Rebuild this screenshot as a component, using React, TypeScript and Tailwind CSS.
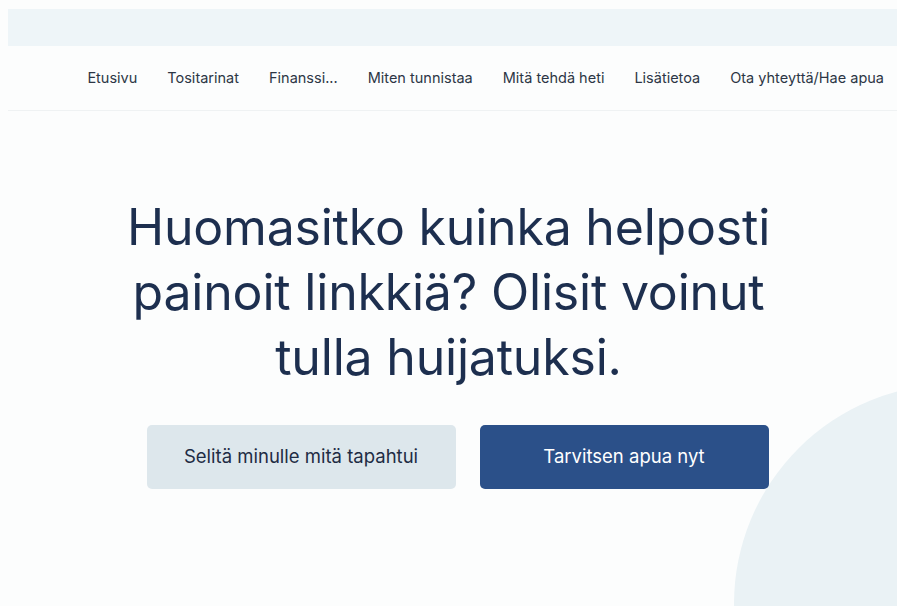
const navLinks = [
  'Etusivu',
  'Tositarinat',
  'Finanssi...',
  'Miten tunnistaa',
  'Mitä tehdä heti',
  'Lisätietoa',
  'Ota yhteyttä/Hae apua',
];

export default function App() {
  return (
    <div className="relative min-h-[606px] overflow-hidden bg-[#fcfdfd] pl-[8px] pt-[9px] font-['Inter',sans-serif]">
      {/* decorative blob in the lower right corner */}
      <div className="pointer-events-none absolute left-[734px] top-[384px] h-[440px] w-[440px] rounded-full bg-[#eaf2f5]" />

      <div className="h-[37px] bg-[#eef5f8]" />

      <nav className="flex h-[65px] items-center justify-end gap-[30px] border-b border-[#eff2f3] pr-[13px] text-[14.5px] text-[#2c3645]">
        {navLinks.map((link) => (
          <a key={link} href="#" className="whitespace-nowrap">
            {link}
          </a>
        ))}
      </nav>

      <main className="relative flex flex-col items-center pr-[8px] pt-[84px]">
        <h1 className="max-w-[700px] text-center text-[50px] leading-[65px] font-normal tracking-[-0.2px] text-[#1d2f4f]">
          Huomasitko kuinka helposti painoit linkkiä? Olisit voinut tulla huijatuksi.
        </h1>

        <div className="mt-[35px] ml-[18px] flex gap-[24px]">
          <button className="h-[64px] w-[309px] rounded-[5px] bg-[#dde7ec] text-[18.5px] text-[#1e2c44]">
            Selitä minulle mitä tapahtui
          </button>
          <button className="h-[64px] w-[289px] rounded-[5px] bg-[#2b5089] text-[18.5px] text-white">
            Tarvitsen apua nyt
          </button>
        </div>
      </main>
    </div>
  );
}
